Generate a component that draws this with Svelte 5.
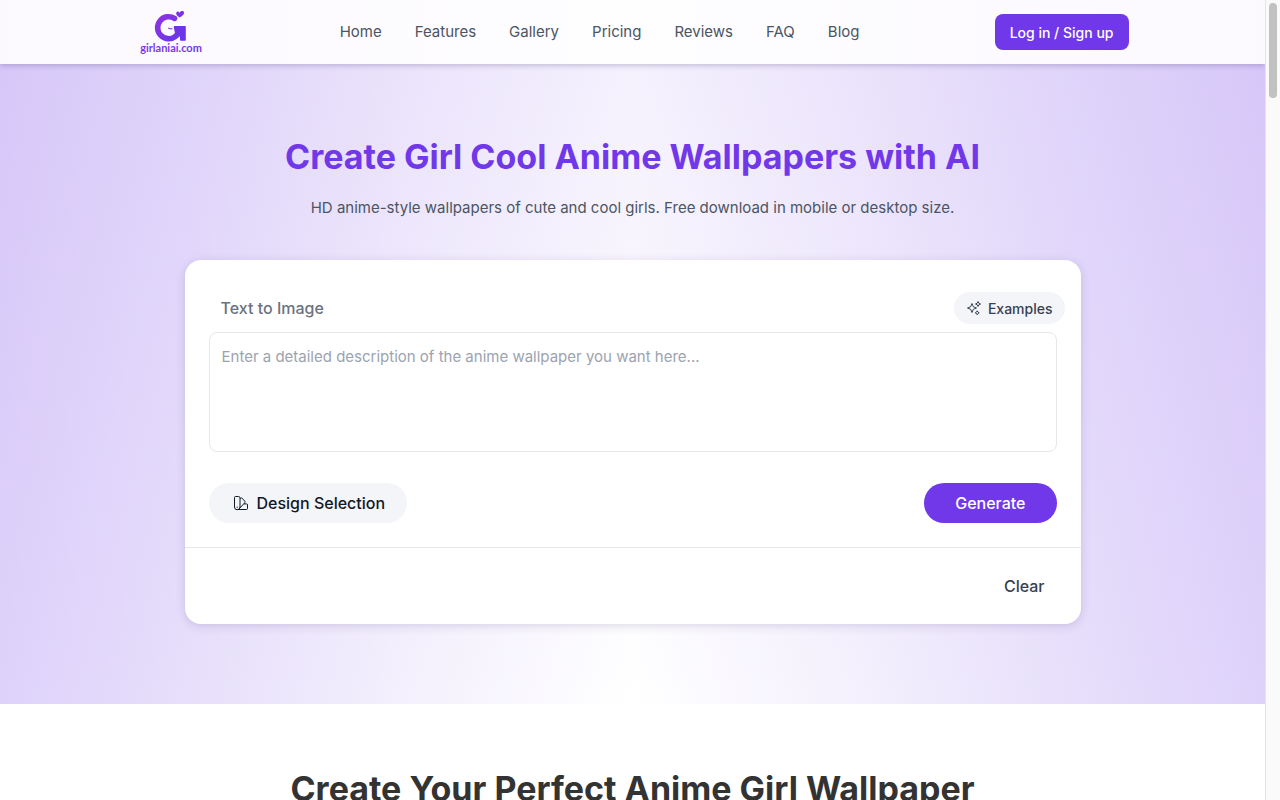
<script lang="ts">
  const links = ["Home", "Features", "Gallery", "Pricing", "Reviews", "FAQ", "Blog"];
  let prompt = "";

  function clearPrompt() {
    prompt = "";
  }
</script>

<div class="shell">
  <div class="page">
    <header>
      <div class="bar">
        <a class="logo" href="/" aria-label="girlaniai.com">
          <svg viewBox="0 0 68 56" width="68" height="56">
            <defs>
              <linearGradient id="brand" x1="0" y1="0" x2="1" y2="1">
                <stop offset="0" stop-color="#8f32e2" />
                <stop offset="1" stop-color="#6a38ea" />
              </linearGradient>
            </defs>
            <path
              d="M37.5 14.4 A11 11 0 1 0 38 32.7 L43 28.5"
              fill="none"
              stroke="url(#brand)"
              stroke-width="5.6"
              stroke-linecap="round"
              stroke-linejoin="round"
            />
            <path
              d="M37.5 22.7 H48 V36 H43.8 V29.5 L40 31 L38.5 28 Z"
              fill="#6e35e8"
              stroke="#6e35e8"
              stroke-width="1.6"
              stroke-linejoin="round"
            />
            <path d="M31 24 l2 .8 h2.5" fill="none" stroke="#7a34e4" stroke-width="1" />
            <path
              d="M42.6 13.6 C40 12 38.6 10.3 39.3 8.6 C40.1 6.8 42.2 7.2 42.5 8.9 C43.5 6.7 46.4 6.5 47 8.3 C47.5 10.6 45 12.1 42.6 13.6 Z"
              fill="#7b32e5"
            />
            <text x="34" y="48" text-anchor="middle" fill="url(#brand)">girlaniai.com</text>
          </svg>
        </a>
        <nav>
          {#each links as link}
            <a href={"#" + link.toLowerCase()}>{link}</a>
          {/each}
        </nav>
        <button class="login">Log in / Sign up</button>
      </div>
    </header>

    <section class="hero">
      <h1>Create Girl Cool Anime Wallpapers with AI</h1>
      <p class="subtitle">
        HD anime-style wallpapers of cute and cool girls. Free download in mobile or desktop size.
      </p>

      <div class="card">
        <div class="card-body">
          <div class="card-top">
            <label for="prompt">Text to Image</label>
            <button class="examples">
              <svg viewBox="0 0 16 16" width="16" height="16" fill="none" stroke="currentColor" stroke-linejoin="round">
                <path d="M6 3.5 L7.3 6.7 L10.5 8 L7.3 9.3 L6 12.5 L4.7 9.3 L1.5 8 L4.7 6.7 Z" />
                <path d="M12 1.5 L12.8 3.2 L14.5 4 L12.8 4.8 L12 6.5 L11.2 4.8 L9.5 4 L11.2 3.2 Z" />
                <path d="M11.2 10.8 L11.9 12.1 L13.2 12.8 L11.9 13.5 L11.2 14.8 L10.5 13.5 L9.2 12.8 L10.5 12.1 Z" />
              </svg>
              Examples
            </button>
          </div>
          <textarea
            id="prompt"
            bind:value={prompt}
            placeholder="Enter a detailed description of the anime wallpaper you want here..."
          ></textarea>
          <div class="actions">
            <button class="design">
              <svg viewBox="0 0 16 16" width="16" height="16" fill="none" stroke="currentColor" stroke-linejoin="round">
                <path d="M2.5 1.5 H5.5 Q7 1.5 7 3 V12 A2.7 2.7 0 0 1 1.5 12 V2.5 Q1.5 1.5 2.5 1.5 Z" />
                <path d="M7 3.8 L8.5 2.7 L11.8 6.2 Q12.4 7 11.8 7.7 L6.2 13.8" />
                <path d="M10.8 8.9 H13.5 Q14.5 8.9 14.5 10 V13.5 Q14.5 14.5 13.5 14.5 H4.5" />
                <path d="M4.2 12 v.4" stroke-linecap="round" />
              </svg>
              Design Selection
            </button>
            <button class="generate">Generate</button>
          </div>
        </div>
        <div class="card-footer">
          <button class="clear" on:click={clearPrompt}>Clear</button>
        </div>
      </div>
    </section>

    <section class="intro">
      <h2>Create Your Perfect Anime Girl Wallpaper</h2>
    </section>
  </div>

  <div class="scrollbar"><div class="thumb"></div></div>
</div>

<style>
  :global(body) {
    overflow: hidden;
  }

  .shell {
    display: flex;
    height: 100vh;
    overflow: hidden;
    background: #fff;
    font-family: Inter, "Liberation Sans", sans-serif;
    font-size: 16px;
    line-height: 24px;
  }

  .shell * {
    box-sizing: border-box;
  }

  .page {
    flex: 1;
    min-width: 0;
    overflow: hidden;
  }

  button {
    border: none;
    font-family: inherit;
    font-weight: 500;
    cursor: pointer;
  }

  header {
    position: relative;
    z-index: 1;
    background: linear-gradient(90deg, #fbf9fe, #fefdff 50%, #fbf9fe);
    box-shadow: 0 2px 5px rgba(50, 30, 100, 0.22);
  }

  .bar {
    display: flex;
    align-items: center;
    justify-content: space-between;
    max-width: 1024px;
    height: 64px;
    margin: 0 auto;
    padding: 0 16px;
  }

  .logo svg {
    display: block;
  }

  .logo text {
    font-family: Lato, sans-serif;
    font-size: 11px;
    font-weight: 700;
  }

  nav {
    display: flex;
    gap: 33px;
  }

  nav a {
    color: #4b5563;
    font-size: 15px;
    text-decoration: none;
  }

  .login {
    height: 36px;
    padding: 0 15px;
    border-radius: 8px;
    background: #7138e9;
    color: #fff;
    font-size: 14px;
  }

  .hero {
    padding: 72px 24px 80px;
    background:
      linear-gradient(180deg, rgba(112, 56, 232, 0.07), rgba(112, 56, 232, 0)),
      linear-gradient(90deg, #ded2fa, #e7dffb 15%, #f4f0fd 32%, #fff 50%, #f4f0fd 68%, #e7dffb 85%, #ded2fa);
    text-align: center;
  }

  h1,
  h2 {
    margin: 0;
    font-size: 34px;
    font-weight: 700;
    line-height: 42px;
  }

  h1 {
    color: #7138e9;
  }

  .subtitle {
    margin: 18px 0 40px;
    color: #4b5563;
    font-size: 15px;
  }

  .card {
    max-width: 896px;
    margin: 0 auto;
    border-radius: 16px;
    background: #fff;
    box-shadow: 0 2px 10px rgba(60, 40, 110, 0.17);
    text-align: left;
  }

  .card-body {
    padding: 32px 24px 24px;
  }

  .card-top {
    display: flex;
    align-items: center;
    justify-content: space-between;
    margin: 0 -8px 8px 12px;
  }

  label {
    color: #6b7280;
    font-size: 16px;
    font-weight: 500;
  }

  .examples,
  .design {
    display: flex;
    align-items: center;
    gap: 8px;
    background: #f3f5f8;
  }

  .examples {
    gap: 6px;
    height: 32px;
    padding: 0 12px;
    border-radius: 16px;
    color: #374151;
    font-size: 14px;
  }

  textarea {
    display: block;
    width: 100%;
    height: 120px;
    padding: 12px;
    border: 1px solid #e5e7eb;
    border-radius: 8px;
    background: #fff;
    font-family: inherit;
    font-size: 15px;
    line-height: 24px;
    resize: none;
  }

  textarea::placeholder {
    color: #9ca3af;
  }

  .actions {
    display: flex;
    justify-content: space-between;
    margin-top: 31px;
  }

  .design,
  .generate {
    height: 40px;
    border-radius: 20px;
    font-size: 16px;
  }

  .design {
    padding: 0 22px 0 24px;
    color: #111827;
  }

  .generate {
    padding: 0 31px;
    background: #7138e9;
    color: #fff;
  }

  .card-footer {
    display: flex;
    justify-content: flex-end;
    padding: 18px 20px;
    border-top: 1px solid #e5e7eb;
  }

  .clear {
    height: 40px;
    padding: 0 16px;
    background: none;
    color: #374151;
    font-size: 16px;
  }

  .intro {
    padding: 64px 24px;
    color: #333;
    text-align: center;
  }

  .scrollbar {
    width: 15px;
    padding: 3px;
    border-left: 1px solid #e4e4e4;
    background: #fafafa;
  }

  .thumb {
    height: 95px;
    border-radius: 4px;
    background: #c1c1c1;
  }
</style>
